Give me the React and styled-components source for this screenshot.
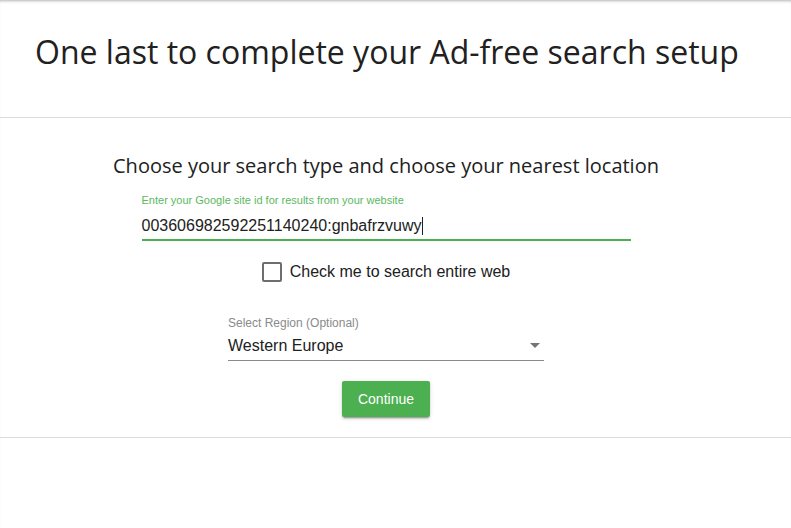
import React from "react";
import styled, { createGlobalStyle } from "styled-components";

const Global = createGlobalStyle`
  html, body { margin: 0; padding: 0; background: #fff; }
  body { font-family: "Liberation Sans", Arial, sans-serif; color: #212121; }
`;

const Page = styled.div`
  width: 791px;
  min-height: 528px;
  background: #fff;
  box-shadow: inset 0 3px 3px -2px rgba(0,0,0,0.3);
`;

const Header = styled.header`
  height: 118px;
  border-bottom: 1px solid #dcdcdc;
  padding: 32px 0 0 35px;
  box-sizing: border-box;
`;

const Title = styled.h1`
  margin: 0;
  font-family: "Open Sans", sans-serif;
  font-weight: 400;
  font-size: 32px;
  line-height: 40px;
  color: #212121;
`;

const Main = styled.main`
  border-bottom: 1px solid #dcdcdc;
  padding: 34px 19px 20px 0;
  display: flex;
  flex-direction: column;
  align-items: center;
`;

const Subtitle = styled.h2`
  margin: 0;
  font-family: "Open Sans", sans-serif;
  font-weight: 400;
  font-size: 20px;
  line-height: 28px;
  color: #212121;
`;

const Field = styled.div`
  width: ${p => p.$w}px;
  margin-top: ${p => p.$mt}px;
  display: flex;
  flex-direction: column;
  gap: ${p => p.$gap}px;
`;

const Label = styled.label`
  font-size: ${p => p.$size}px;
  line-height: 14px;
  color: ${p => p.$color};
`;

const Control = styled.div`
  display: flex;
  align-items: center;
  height: ${p => p.$h}px;
  border-bottom: ${p => p.$thick}px solid ${p => p.$color};
  font-size: 16px;
  color: #212121;
`;

const Caret = styled.span`
  display: inline-block;
  width: 1px;
  height: 18px;
  background: #212121;
  margin-left: 1px;
`;

const Value = styled.span`
  flex: 1;
`;

const CheckRow = styled.label`
  display: flex;
  align-items: center;
  gap: 8px;
  margin-top: 21px;
  font-size: 16px;
  color: #212121;
`;

const Box = styled.span`
  width: 16px;
  height: 16px;
  border: 2px solid #6e6e6e;
  border-radius: 2px;
`;

const Arrow = styled.span`
  width: 0;
  height: 0;
  border-left: 5px solid transparent;
  border-right: 5px solid transparent;
  border-top: 5px solid #757575;
  margin-right: 4px;
`;

const Button = styled.button`
  margin-top: 20px;
  width: 88px;
  height: 36px;
  border: none;
  border-radius: 2px;
  background: #4caf50;
  color: #fff;
  font-family: "Liberation Sans", Arial, sans-serif;
  font-size: 14px;
  box-shadow: 0 2px 2px 0 rgba(0,0,0,0.14), 0 3px 1px -2px rgba(0,0,0,0.2), 0 1px 5px 0 rgba(0,0,0,0.12);
`;

export default function App() {
  return (
    <>
      <Global />
      <Page>
        <Header>
          <Title>One last to complete your Ad-free search setup</Title>
        </Header>
        <Main>
          <Subtitle>Choose your search type and choose your nearest location</Subtitle>
          <Field $w={489} $mt={13} $gap={6}>
            <Label $size={11} $color="#5cb85f">Enter your Google site id for results from your website</Label>
            <Control $h={26} $thick={2} $color="#4caf50">
              <span>003606982592251140240:gnbafrzvuwy</span>
              <Caret />
            </Control>
          </Field>
          <CheckRow>
            <Box />
            Check me to search entire web
          </CheckRow>
          <Field $w={316} $mt={34} $gap={1}>
            <Label $size={12} $color="#8a8a8a">Select Region (Optional)</Label>
            <Control $h={29} $thick={1} $color="#8a8a8a">
              <Value>Western Europe</Value>
              <Arrow />
            </Control>
          </Field>
          <Button>Continue</Button>
        </Main>
      </Page>
    </>
  );
}
